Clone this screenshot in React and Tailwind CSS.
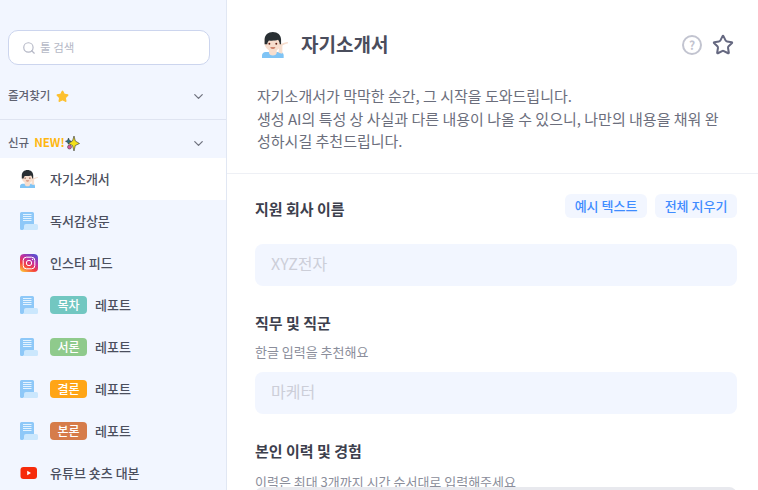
import React from 'react';
import { Search, ChevronDown, Star } from 'lucide-react';

const ManIcon = ({ size = 18 }) => (
  <svg width={size} height={size} viewBox="0 0 30 30" className="shrink-0">
    <path d="M0 30v-3c0-2.500 2-4 4-4h17c2.500 0 4 1.500 4 4v3z" fill="#7fc4f5" />
    <path d="M8 20h9v4c0 1.800-2 3-4.500 3S8 25.800 8 24z" fill="#f7dece" />
    <path d="M19 24l1-9c3-1.800 6-3 9-3.500 1.300-.2 1.400 1.500.2 1.800-2.500.6-4.500 1.300-5.700 2.700L23.500 25z" fill="#f7dece" />
    <path d="M3 8h19v5c0 5-4 9-9.500 9S3 18 3 13z" fill="#f7dece" />
    <path d="M12.500 0C18 0 22 3.500 22 9v5h-1.500c-.3-2.500-1-4-2-5-3 1-7.500 1.300-10.500.8-.8 1-1.700 2.200-2 4.200H3V9c0-5.500 4-9 9.500-9z" fill="#292f33" />
    <circle cx="8.500" cy="13.500" r="1.100" fill="#662113" />
    <circle cx="16.500" cy="13.500" r="1.100" fill="#662113" />
    <path d="M9.500 17.500h6c-.5 1.200-1.600 1.800-3 1.800s-2.500-.6-3-1.800z" fill="#c1694f" />
  </svg>
);

const ScrollIcon = () => (
  <svg width="18" height="18" viewBox="0 0 18 18" className="shrink-0">
    <path d="M0 1.500A1.500 1.500 0 0 1 1.500 0h11A1.500 1.500 0 0 1 14 1.500V14H4v2.500A1.500 1.500 0 0 1 2.500 18h-1A1.500 1.500 0 0 1 0 16.500z" fill="#8ec8f8" />
    <path d="M3 2.500h8.500M3 4.500h8.500M3 6.500h8.500M3 8.500h8.500" stroke="#eef7ff" strokeWidth="0.9" />
    <path d="M6 12h10.500a1.500 1.500 0 0 1 1.500 1.500v3a1.500 1.500 0 0 1-1.500 1.500H2.500A1.500 1.500 0 0 0 4 16.500v-2.500a2 2 0 0 1 2-2z" fill="#cbe7fd" />
  </svg>
);

const InstaIcon = () => (
  <svg width="18" height="18" viewBox="0 0 18 18" className="shrink-0">
    <defs>
      <linearGradient id="insta" x1="0.15" y1="1" x2="0.75" y2="0">
        <stop offset="0" stopColor="#fdc33c" />
        <stop offset="0.35" stopColor="#f5403f" />
        <stop offset="0.65" stopColor="#c22fa0" />
        <stop offset="1" stopColor="#5a4fd0" />
      </linearGradient>
    </defs>
    <rect width="18" height="18" rx="4" fill="url(#insta)" />
    <rect x="3.200" y="3.200" width="11.600" height="11.600" rx="3.200" fill="none" stroke="#fff" strokeWidth="1" />
    <circle cx="9" cy="9" r="2.700" fill="none" stroke="#fff" strokeWidth="1" />
    <circle cx="12.500" cy="5.500" r="0.700" fill="#fff" />
  </svg>
);

const YoutubeIcon = () => (
  <svg width="18" height="18" viewBox="0 0 18 18" className="shrink-0">
    <rect x="0.500" y="3" width="16.500" height="12" rx="3" fill="#f62b0b" />
    <path d="M7.200 6.800v4.400L11 9z" fill="#fff" />
  </svg>
);

const Sparkle = () => (
  <svg width="15" height="15" viewBox="0 0 15 15" className="shrink-0">
    <path d="M3.500 2l1 2.500 2 .8-2 1-1 2-1-2-2-1 2-.8z" fill="#2a6f7f" stroke="#222" strokeWidth="0.5" />
    <path d="M9 0l1.300 5 4.200 2.500-4.200 2L9 15l-1.500-5.500L3.500 7.500l4-2.500z" fill="#f3e01a" stroke="#333" strokeWidth="0.6" />
    <circle cx="4.500" cy="11" r="2" fill="#d85a9a" stroke="#333" strokeWidth="0.5" />
  </svg>
);

const tools = [
  { icon: <ScrollIcon />, name: '독서감상문' },
  { icon: <InstaIcon />, name: '인스타 피드' },
  { icon: <ScrollIcon />, badge: '목차', color: 'bg-[#72c7c1]', name: '레포트' },
  { icon: <ScrollIcon />, badge: '서론', color: 'bg-[#8fca8c]', name: '레포트' },
  { icon: <ScrollIcon />, badge: '결론', color: 'bg-[#ffa516]', name: '레포트' },
  { icon: <ScrollIcon />, badge: '본론', color: 'bg-[#d67c4a]', name: '레포트' },
  { icon: <YoutubeIcon />, name: '유튜브 숏츠 대본' },
];

const ToolRow = ({ icon, name, badge, color, active }) => (
  <div className={`flex h-[42px] shrink-0 items-center gap-3 pl-5 ${active ? 'bg-white' : ''}`}>
    {icon}
    <div className="flex items-center gap-2 text-[13px] font-medium text-[#4b4f5e]">
      {badge && (
        <span className={`flex h-[18px] w-[37px] items-center justify-center rounded text-[12px] text-white ${color}`}>
          {badge}
        </span>
      )}
      {name}
    </div>
  </div>
);

const Field = ({ label, help, placeholder, right, helpClass = 'mt-2' }) => (
  <div>
    <div className="flex h-[24px] items-center justify-between">
      <div className="pt-[2px] text-[15px] font-semibold text-[#3d404d]">{label}</div>
      {right}
    </div>
    {help && <div className={`text-[13px] leading-[18px] text-[#8b8e9b] ${helpClass}`}>{help}</div>}
    {placeholder && (
      <div className={`${help ? 'mt-[11px]' : 'mt-[23px]'} flex h-[42px] items-center rounded-lg bg-[#f2f6ff] px-4 pb-1 text-[16px] text-[#ccced8]`}>
        {placeholder}
      </div>
    )}
  </div>
);

export default function App() {
  return (
    <div
      className="flex h-[490px] w-[758px] overflow-hidden bg-white"
      style={{ fontFamily: '"Noto Sans CJK KR", "Noto Sans", sans-serif' }}
    >
      {/* 사이드바 */}
      <aside className="w-[227px] shrink-0 overflow-hidden border-r border-[#e1e7f3] bg-[#f2f6ff]">
        <div className="px-2 pt-[30px]">
          <div className="flex h-[35px] w-[202px] items-center gap-1 rounded-[10px] border border-[#ccd5ee] bg-white pl-[13px] text-[11.500px] text-[#b5b8c6]">
            <Search size={14} className="text-[#b5b8c6]" />
            툴 검색
          </div>
        </div>
        <div className="mt-[21px] flex h-[20px] items-center justify-between pl-2 pr-[20px]">
          <div className="flex items-center gap-[6px] text-[11.500px] font-medium text-[#5f6270]">
            즐겨찾기
            <Star size={13} className="fill-[#fdc02f] text-[#fdc02f]" />
          </div>
          <ChevronDown size={15} className="text-[#70737f]" />
        </div>
        <div className="mt-[13px] h-px bg-[#dfe4f1]" />
        <div className="mt-[13px] flex h-[20px] items-center justify-between pl-2 pr-[20px]">
          <div className="flex items-center gap-[5px] text-[11.500px] font-medium text-[#5f6270]">
            신규
            <span className="flex items-center font-bold text-[#ffb70f]">
              NEW!
              <Sparkle />
            </span>
          </div>
          <ChevronDown size={15} className="text-[#70737f]" />
        </div>
        <div className="mt-[5px] flex flex-col">
          <ToolRow icon={<ManIcon />} name="자기소개서" active />
          {tools.map((tool, i) => (
            <ToolRow key={i} {...tool} />
          ))}
        </div>
      </aside>

      {/* 본문 */}
      <main className="flex-1 overflow-hidden">
        <div className="border-b border-[#eef0f5] pb-[20px] pl-[30px] pr-[24px] pt-[30px]">
          <div className="flex h-[30px] items-center justify-between">
            <div className="flex items-center gap-[13px] pl-[5px]">
              <ManIcon size={26} />
              <h1 className="pb-[2px] text-[19px] font-bold text-[#4a4d5c]">자기소개서</h1>
            </div>
            <div className="flex items-center gap-[10px] pl-px">
              <div className="flex h-5 w-5 items-center justify-center rounded-full border-2 border-[#c2c4d0] text-[12px] font-bold text-[#c2c4d0]">?</div>
              <Star size={22} strokeWidth={2.2} className="text-[#656880]" />
            </div>
          </div>
          <p className="mt-[25px] w-[472px] text-[15px] leading-[22.500px] text-[#6b6e7c]">
            자기소개서가 막막한 순간, 그 시작을 도와드립니다.
            <br />
            생성 AI의 특성 상 사실과 다른 내용이 나올 수 있으니, 나만의 내용을 채워 완성하시길 추천드립니다.
          </p>
        </div>
        <div className="flex flex-col gap-[25px] pl-[28px] pr-[21px] pt-[23px]">
          <Field
            label="지원 회사 이름"
            placeholder="XYZ전자"
            right={
              <div className="-mt-[6px] flex gap-2">
                <button className="flex h-[24px] w-[82px] items-center justify-center rounded-md bg-[#f2f6ff] text-[13px] font-medium text-[#3f8cff]">예시 텍스트</button>
                <button className="flex h-[24px] w-[82px] items-center justify-center rounded-md bg-[#f2f6ff] text-[13px] font-medium text-[#3f8cff]">전체 지우기</button>
              </div>
            }
          />
          <Field label="직무 및 직군" help="한글 입력을 추천해요" placeholder="마케터" />
          <div className="relative">
            <Field label="본인 이력 및 경험" help="이력은 최대 3개까지 시간 순서대로 입력해주세요" helpClass="mt-[10px]" />
            <div className="absolute left-0 right-0 top-[48px] h-[60px] rounded-lg bg-[#e8e9ee]" />
          </div>
        </div>
      </main>
    </div>
  );
}
